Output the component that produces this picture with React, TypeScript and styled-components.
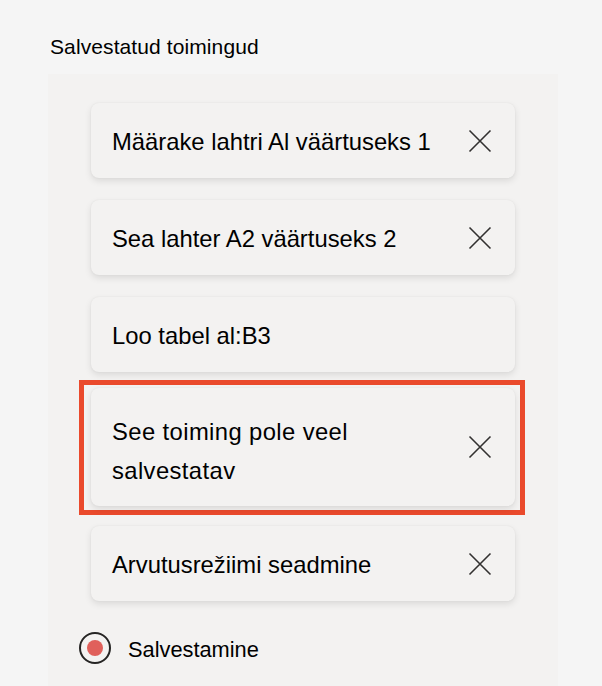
import styled, { createGlobalStyle } from 'styled-components'

const GlobalStyle = createGlobalStyle`
	html, body {
		margin: 0;
		padding: 0;
		background: #f5f5f5;
		font-family: "Liberation Sans", Arial, sans-serif;
		color: #000;
	}
`

const Page = styled.div`
	height: 686px;
	overflow: hidden;
	display: flex;
	flex-direction: column;
`

const Heading = styled.div`
	font-size: 21px;
	line-height: 24px;
	padding: 35px 0 0 50px;
	height: 39px;
	letter-spacing: 0.1px;
`

const Panel = styled.div`
	flex: 1;
	margin-left: 48px;
	width: 510px;
	background: #f3f2f1;
	padding: 29px 0 0 43px;
	box-sizing: border-box;
`

const List = styled.div`
	width: 424px;
	display: flex;
	flex-direction: column;
	gap: 22px;
`

const Card = styled.div<{ $tall?: boolean }>`
	box-sizing: border-box;
	min-height: ${({ $tall }) => ($tall ? '118px' : '75px')};
	padding: 0 23px 0 21px;
	background: #f3f2f1;
	border-radius: 8px;
	box-shadow: 0 3px 7px rgba(0, 0, 0, 0.1), 0 0 2px rgba(0, 0, 0, 0.06);
	display: flex;
	align-items: center;
	justify-content: space-between;
`

const Label = styled.div<{ $wrap?: boolean }>`
	font-size: 23.8px;
	line-height: ${({ $wrap }) => ($wrap ? '39px' : '30px')};
	max-width: ${({ $wrap }) => ($wrap ? '265px' : 'none')};
	padding-top: ${({ $wrap }) => ($wrap ? '7px' : '3px')};
	letter-spacing: ${({ $wrap }) => ($wrap ? '0.4px' : '0')};
`

const Highlight = styled.div`
	margin: -14px -10px -11px -12px;
	padding: 3px 5px 4px 7px;
	border: 5px solid #ea4a2c;
`

const CloseButton = styled.button`
	border: 0;
	background: transparent;
	padding: 0;
	width: 24px;
	height: 24px;
	display: flex;
	align-items: center;
	justify-content: center;
	cursor: pointer;
	flex-shrink: 0;
`

const RecordRow = styled.div`
	display: flex;
	align-items: center;
	gap: 17px;
	margin: 29px 0 0 -12px;
`

const RecordDot = styled.span`
	box-sizing: border-box;
	width: 32px;
	height: 32px;
	border-radius: 50%;
	border: 2.5px solid #252423;
	display: flex;
	align-items: center;
	justify-content: center;
	&::after {
		content: "";
		width: 16px;
		height: 16px;
		border-radius: 50%;
		background: #e0605b;
	}
`

const RecordLabel = styled.span`
	font-size: 21.8px;
	line-height: 32px;
	padding-top: 4px;
`

const CloseIcon = () => (
	<svg width="24" height="24" viewBox="0 0 24 24" fill="none">
		<path d="M1.5 1.5 L22.5 22.5 M22.5 1.5 L1.5 22.5" stroke="#323130" strokeWidth="1.6" />
	</svg>
)

interface Action {
	text: string
	removable: boolean
	blocked?: boolean
}

const actions: Action[] = [
	{ text: 'Määrake lahtri Al väärtuseks 1', removable: true },
	{ text: 'Sea lahter A2 väärtuseks 2', removable: true },
	{ text: 'Loo tabel al:B3', removable: false },
	{ text: 'See toiming pole veel salvestatav', removable: true, blocked: true },
	{ text: 'Arvutusrežiimi seadmine', removable: true },
]

const ActionCard = ({ action }: { action: Action }) => (
	<Card $tall={action.blocked}>
		<Label $wrap={action.blocked}>{action.text}</Label>
		{action.removable && (
			<CloseButton aria-label="Eemalda">
				<CloseIcon />
			</CloseButton>
		)}
	</Card>
)

export default function App() {
	return (
		<Page>
			<GlobalStyle />
			<Heading>Salvestatud toimingud</Heading>
			<Panel>
				<List>
					{actions.map(a =>
						a.blocked ? (
							<Highlight key={a.text}>
								<ActionCard action={a} />
							</Highlight>
						) : (
							<ActionCard key={a.text} action={a} />
						)
					)}
				</List>
				<RecordRow>
					<RecordDot />
					<RecordLabel>Salvestamine</RecordLabel>
				</RecordRow>
			</Panel>
		</Page>
	)
}
